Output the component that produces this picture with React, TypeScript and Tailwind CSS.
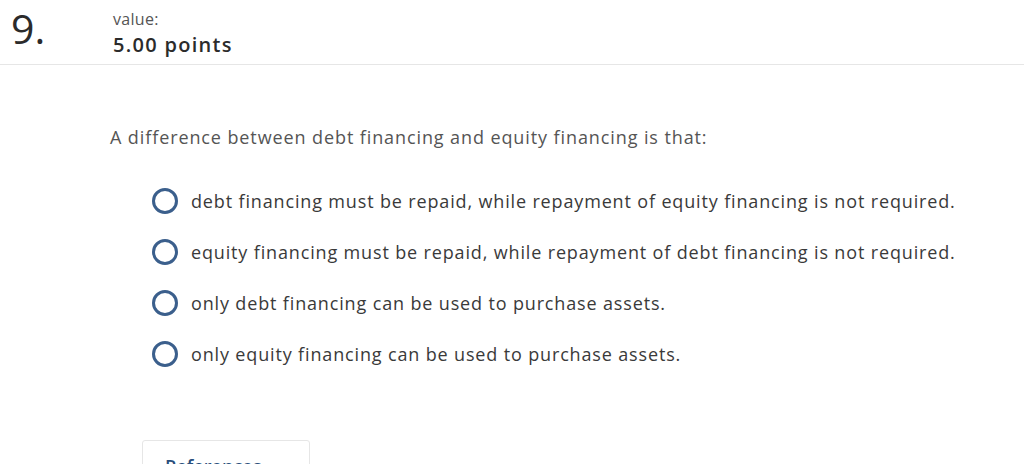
const options = [
  'debt financing must be repaid, while repayment of equity financing is not required.',
  'equity financing must be repaid, while repayment of debt financing is not required.',
  'only debt financing can be used to purchase assets.',
  'only equity financing can be used to purchase assets.',
]

export default function App() {
  return (
    <div className="w-[1024px] h-[464px] overflow-hidden bg-white text-[#333] font-['Open_Sans',sans-serif]">
      <div className="h-[65px] border-b border-[#e6e6e6] flex items-start">
        <div className="w-[113px] pl-[11px] pt-[4px] text-[41px] leading-[48px] font-normal text-[#2b2b2b]">9.</div>
        <div className="pt-[10px]">
          <div className="text-[16px] leading-[19px] tracking-[0.3px] text-[#555]">value:</div>
          <div className="mt-[4px] text-[20px] leading-[24px] font-semibold tracking-[1.3px] text-[#2b2b2b]">5.00 points</div>
        </div>
      </div>

      <div className="pl-[110px] pt-[60px] text-[18px] leading-[24px] tracking-[0.9px] text-[#555]">
        A difference between debt financing and equity financing is that:
      </div>

      <div className="pl-[152px] pt-[39px] flex flex-col gap-[25px]">
        {options.map((opt) => (
          <div key={opt} className="flex items-center h-[26px]">
            <span className="w-[26px] h-[26px] rounded-full border-[3px] border-[#3b5f8c] shrink-0" />
            <span className="ml-[13px] text-[18px] leading-[24px] tracking-[0.85px] text-[#3a3a3a]">{opt}</span>
          </div>
        ))}
      </div>

      <div className="ml-[142px] mt-[73px] w-[168px] h-[40px] border border-[#e6e6e6] rounded-[3px] pl-[22px] pt-[12px] text-[18px] font-semibold text-[#2a4f7c]">
        References
      </div>
    </div>
  )
}
